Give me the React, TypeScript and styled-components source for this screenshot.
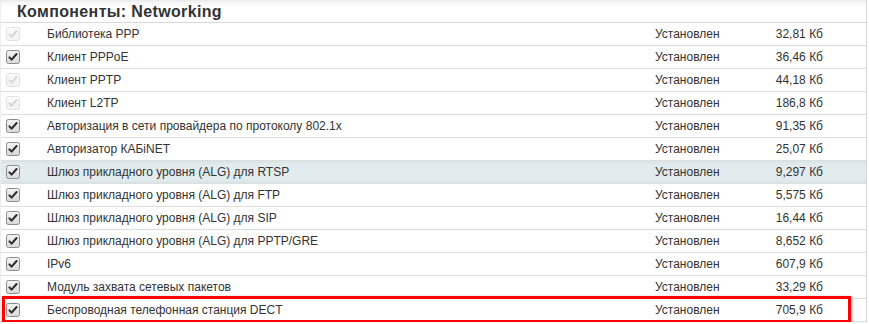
import React from "react";
import styled, { createGlobalStyle } from "styled-components";

const Global = createGlobalStyle`
  html, body { margin: 0; padding: 0; background: #fff; }
  body { font-family: "Liberation Sans", Arial, sans-serif; }
`;

const Panel = styled.div`
  position: relative;
  width: 867px;
  border-right: 1px solid #d4d4d4;
  border-left: 1px solid #eeeeee;
  box-sizing: border-box;
`;

const Header = styled.div`
  height: 23px;
  box-sizing: border-box;
  padding: 1px 0 0 16px;
  display: flex;
  align-items: center;
  font-size: 16px;
  letter-spacing: 0.35px;
  font-weight: bold;
  color: #333;
  background: linear-gradient(#e8e8e8 0px, #f8f8f8 3px, #ffffff 8px);
  border-bottom: 1px solid #d9d9d9;
`;

const Row = styled.div<{ $hl?: boolean }>`
  display: grid;
  grid-template-columns: 46px 608px 120px 48px 1fr;
  align-items: center;
  height: 23px;
  box-sizing: border-box;
  border-bottom: 1px solid #dedede;
  font-size: 12px;
  color: #333;
  background: ${(p) =>
    p.$hl ? "linear-gradient(#d7e3e5 0px, #e2ecee 4px, #e2ecee 18px, #d9e4e6 22px)" : "#fff"};
`;

const CheckCell = styled.div`
  padding-left: 5px;
  display: flex;
  align-items: center;
`;

const Name = styled.div`
  white-space: nowrap;
`;

const Status = styled.div``;

const Size = styled.div`
  text-align: right;
  white-space: nowrap;
`;

const Highlight = styled.div`
  position: absolute;
  left: 1px;
  top: 296px;
  width: 849px;
  height: 27px;
  box-sizing: border-box;
  border: 3px solid #ff0000;
  box-shadow: 1px 1px 3px rgba(0, 0, 0, 0.35);
  pointer-events: none;
`;

const Check = ({ disabled }: { disabled?: boolean }) => (
  <svg width="14" height="14" viewBox="0 0 14 14">
    <defs>
      <linearGradient id={disabled ? "gd" : "ge"} x1="0" y1="0" x2="0" y2="1">
        <stop offset="0" stopColor={disabled ? "#fbfbfb" : "#f4f4f4"} />
        <stop offset="1" stopColor={disabled ? "#f2f2f2" : "#d8d8d8"} />
      </linearGradient>
    </defs>
    <rect
      x="0.5"
      y="0.5"
      width="13"
      height="13"
      rx="2"
      fill={`url(#${disabled ? "gd" : "ge"})`}
      stroke={disabled ? "#e2e2e2" : "#8c8c8c"}
    />
    <path
      d="M3.4 7.4 L5.6 9.6 L10.6 4"
      fill="none"
      stroke={disabled ? "#d6d6d6" : "#2a2a2a"}
      strokeWidth="2"
      strokeLinecap="round"
      strokeLinejoin="round"
    />
  </svg>
);

type Item = { name: string; size: string; disabled?: boolean; hl?: boolean };

const items: Item[] = [
  { name: "Библиотека PPP", size: "32,81 Кб", disabled: true },
  { name: "Клиент PPPoE", size: "36,46 Кб" },
  { name: "Клиент PPTP", size: "44,18 Кб", disabled: true },
  { name: "Клиент L2TP", size: "186,8 Кб", disabled: true },
  { name: "Авторизация в сети провайдера по протоколу 802.1x", size: "91,35 Кб" },
  { name: "Авторизатор КАБiNET", size: "25,07 Кб" },
  { name: "Шлюз прикладного уровня (ALG) для RTSP", size: "9,297 Кб", hl: true },
  { name: "Шлюз прикладного уровня (ALG) для FTP", size: "5,575 Кб" },
  { name: "Шлюз прикладного уровня (ALG) для SIP", size: "16,44 Кб" },
  { name: "Шлюз прикладного уровня (ALG) для PPTP/GRE", size: "8,652 Кб" },
  { name: "IPv6", size: "607,9 Кб" },
  { name: "Модуль захвата сетевых пакетов", size: "33,29 Кб" },
  { name: "Беспроводная телефонная станция DECT", size: "705,9 Кб" },
];

export default function App() {
  return (
    <>
      <Global />
      <Panel>
        <Header>Компоненты: Networking</Header>
        {items.map((it) => (
          <Row key={it.name} $hl={it.hl}>
            <CheckCell>
              <Check disabled={it.disabled} />
            </CheckCell>
            <Name>{it.name}</Name>
            <Status>Установлен</Status>
            <Size>{it.size}</Size>
            <div />
          </Row>
        ))}
        <Highlight />
      </Panel>
    </>
  );
}
